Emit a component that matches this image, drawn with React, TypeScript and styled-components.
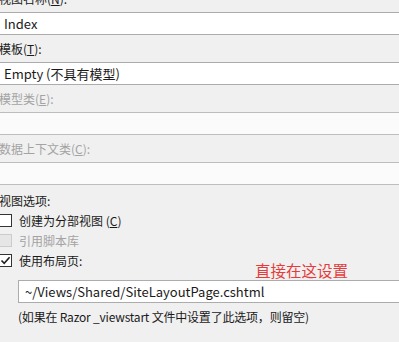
import styled, { createGlobalStyle } from "styled-components";

const GlobalStyle = createGlobalStyle`
  html, body {
    margin: 0;
    padding: 0;
    background: #f0f0f0;
    overflow: hidden;
  }
`;

const Panel = styled.div`
  position: relative;
  width: 399px;
  height: 342px;
  overflow: hidden;
  margin-top: -15px;
  font-family: "Noto Sans CJK SC", "Noto Sans", sans-serif;
  font-size: 12px;
  color: #1a1a1a;
`;

const FieldLabel = styled.div<{ $disabled?: boolean }>`
  height: 27px;
  line-height: 27px;
  margin-left: -1px;
  white-space: nowrap;
  color: ${(p) => (p.$disabled ? "#a3a3a3" : "#1a1a1a")};
`;

const TextBox = styled.div<{ $disabled?: boolean }>`
  height: 21px;
  line-height: 21px;
  margin-left: -4px;
  padding-left: 8px;
  border-top: 1px solid ${(p) => (p.$disabled ? "#bdbdbd" : "#acacac")};
  border-bottom: 1px solid ${(p) => (p.$disabled ? "#bdbdbd" : "#acacac")};
  background: ${(p) => (p.$disabled ? "#fbfbfb" : "#ffffff")};
  font-size: 13px;
  white-space: nowrap;
`;

const SectionLabel = styled.div`
  padding-top: 8px;
  height: 17px;
  line-height: 16px;
  margin-left: -1px;
`;

const CheckRow = styled.label<{ $disabled?: boolean }>`
  display: flex;
  align-items: center;
  gap: 7px;
  height: 20px;
  margin-left: -1px;
  color: ${(p) => (p.$disabled ? "#a3a3a3" : "#1a1a1a")};
  white-space: nowrap;
`;

const Box = styled.span<{ $disabled?: boolean }>`
  display: flex;
  align-items: center;
  justify-content: center;
  box-sizing: border-box;
  width: 13px;
  height: 13px;
  border: 1px solid ${(p) => (p.$disabled ? "#cccccc" : "#333333")};
  background: ${(p) => (p.$disabled ? "#e6e6e6" : "#ffffff")};
`;

const PathBox = styled.div`
  margin: 10px 0 0 18px;
  height: 21px;
  line-height: 21px;
  padding-left: 6px;
  border: 1px solid #acacac;
  border-right: none;
  background: #ffffff;
  font-size: 13px;
`;

const Hint = styled.div`
  margin-left: 18px;
  height: 28px;
  line-height: 28px;
  white-space: nowrap;
  letter-spacing: -0.2px;
`;

const Note = styled.div`
  position: absolute;
  left: 255px;
  top: 276px;
  font-size: 15.5px;
  line-height: 18px;
  color: #e43c3c;
  white-space: nowrap;
`;

function Check({ checked, disabled }: { checked?: boolean; disabled?: boolean }) {
  return (
    <Box $disabled={disabled}>
      {checked && (
        <svg width="11" height="11" viewBox="0 0 11 11">
          <path d="M1.5 5.5 L4.2 8.3 L9.6 2.2" fill="none" stroke="#1f1f1f" strokeWidth="1.6" />
        </svg>
      )}
    </Box>
  );
}

export default function App() {
  return (
    <>
      <GlobalStyle />
      <Panel>
        <FieldLabel>
          视图名称(<u>N</u>):
        </FieldLabel>
        <TextBox>Index</TextBox>
        <FieldLabel>
          模板(<u>T</u>):
        </FieldLabel>
        <TextBox>Empty (不具有模型)</TextBox>
        <FieldLabel $disabled>
          模型类(<u>E</u>):
        </FieldLabel>
        <TextBox $disabled />
        <FieldLabel $disabled>
          数据上下文类(<u>C</u>):
        </FieldLabel>
        <TextBox $disabled />
        <SectionLabel>视图选项:</SectionLabel>
        <CheckRow>
          <Check />
          <span>
            创建为分部视图 (<u>C</u>)
          </span>
        </CheckRow>
        <CheckRow $disabled>
          <Check disabled />
          <span>引用脚本库</span>
        </CheckRow>
        <CheckRow>
          <Check checked />
          <span>使用布局页:</span>
        </CheckRow>
        <PathBox>~/Views/Shared/SiteLayoutPage.cshtml</PathBox>
        <Hint>(如果在 Razor _viewstart 文件中设置了此选项，则留空)</Hint>
        <Note>直接在这设置</Note>
      </Panel>
    </>
  );
}
